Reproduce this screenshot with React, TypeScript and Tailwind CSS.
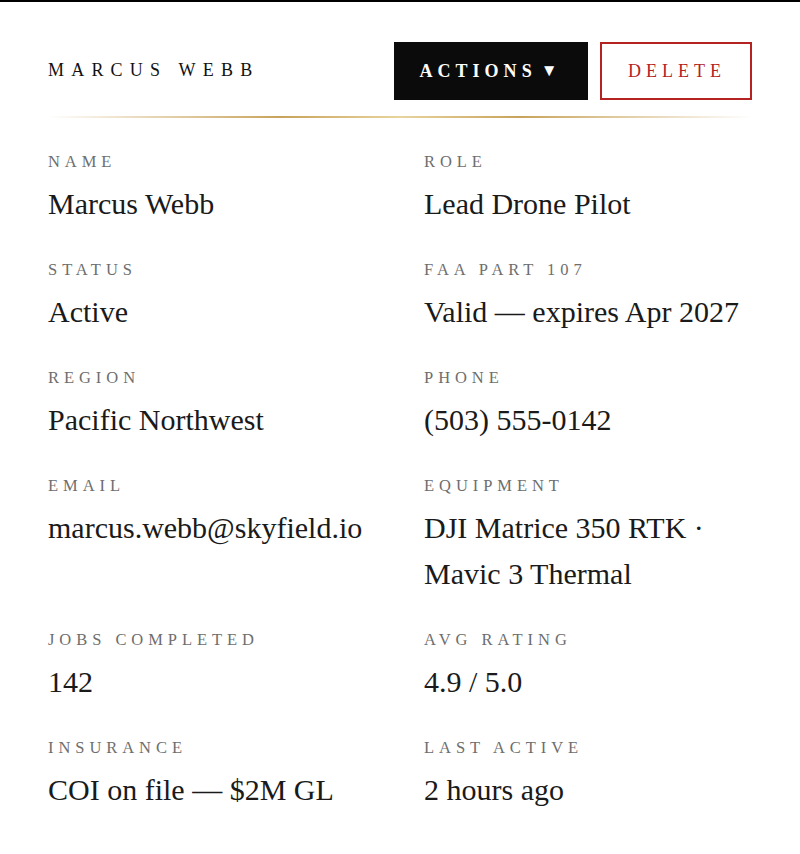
const fields = [
  { label: 'Name', value: 'Marcus Webb' },
  { label: 'Role', value: 'Lead Drone Pilot' },
  { label: 'Status', value: 'Active' },
  { label: 'FAA Part 107', value: 'Valid — expires Apr 2027' },
  { label: 'Region', value: 'Pacific Northwest' },
  { label: 'Phone', value: '(503) 555-0142' },
  { label: 'Email', value: 'marcus.webb@skyfield.io' },
  { label: 'Equipment', value: 'DJI Matrice 350 RTK · Mavic 3 Thermal' },
  { label: 'Jobs Completed', value: '142' },
  { label: 'Avg Rating', value: '4.9 / 5.0' },
  { label: 'Insurance', value: 'COI on file — $2M GL' },
  { label: 'Last Active', value: '2 hours ago' },
];

export default function App() {
  return (
    <div
      className="min-h-[854px] bg-white border-t-2 border-black px-12 pt-10 text-[#1a1a1a]"
      style={{ fontFamily: '"Liberation Serif", "Times New Roman", serif' }}
    >
      <div className="flex items-center justify-between pb-4">
        <h1 className="text-[18px] font-normal uppercase tracking-[0.4em] text-[#111] -mt-[2px]">Marcus Webb</h1>
        <div className="flex gap-3">
          <button className="h-[58px] w-[194px] bg-[#0b0b0b] text-white text-[18px] font-bold uppercase tracking-[0.28em] flex items-center justify-center">
            <span>Actions</span>
            <span className="ml-[4px] text-[17px]">▼</span>
          </button>
          <button className="h-[58px] w-[152px] border-2 border-[#b52222] text-[#b52222] text-[18px] uppercase tracking-[0.28em] flex items-center justify-center pl-[2px]">
            Delete
          </button>
        </div>
      </div>
      <div className="h-[2px] bg-[linear-gradient(90deg,transparent_0%,#c9a35b_33%,#e8d49e_50%,#c9a35b_67%,transparent_100%)]" />

      <div className="grid grid-cols-2 gap-x-12 gap-y-[31px] pt-[32px]">
        {fields.map((f) => (
          <div key={f.label}>
            <div className="text-[16.5px] leading-6 uppercase tracking-[0.3em] text-[#6e6e6e]">{f.label}</div>
            <div className="mt-[7px] text-[30px] leading-[46px]">{f.value}</div>
          </div>
        ))}
      </div>
    </div>
  );
}
